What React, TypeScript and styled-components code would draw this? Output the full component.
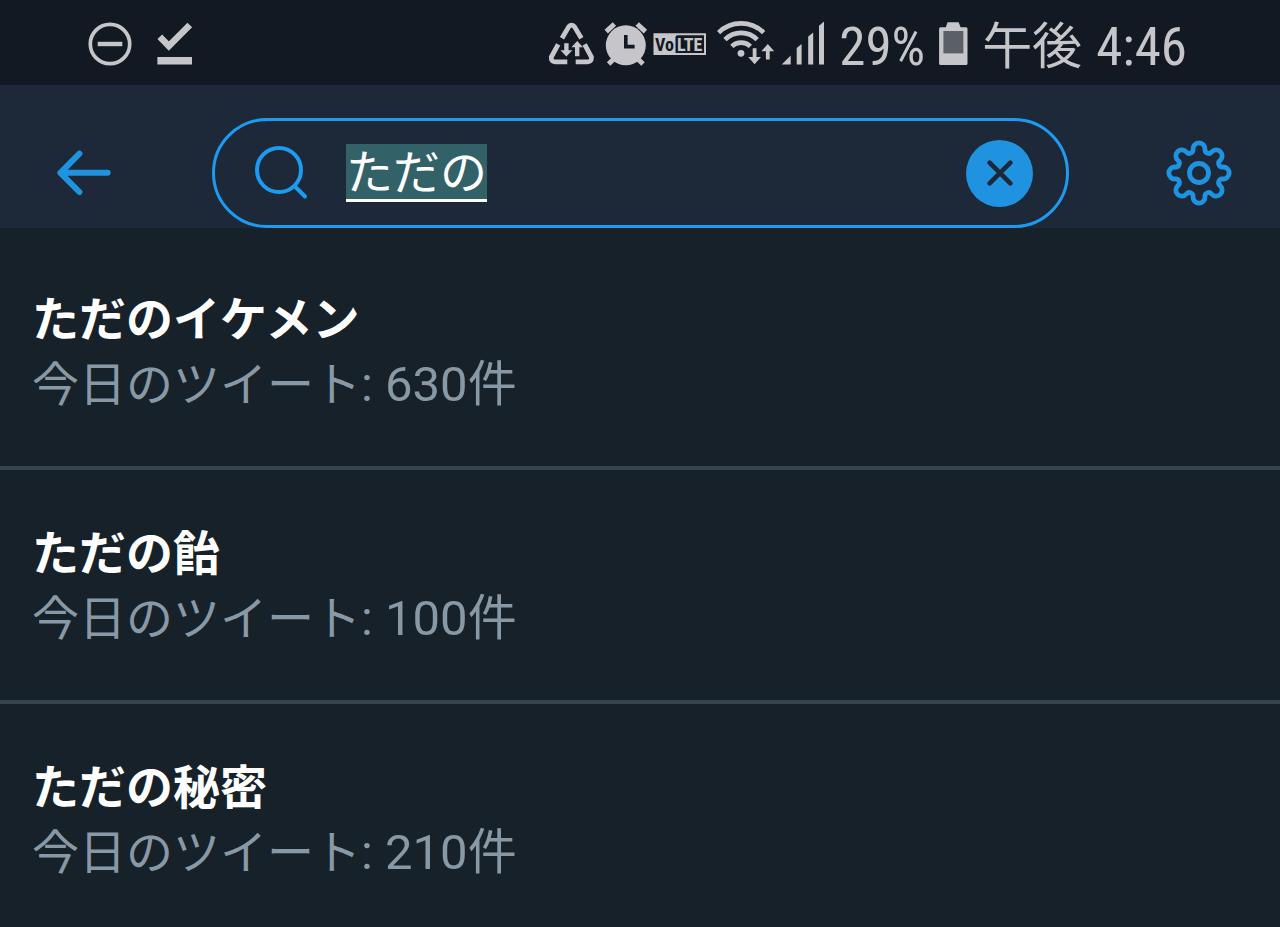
import React, { useState } from "react";
import styled, { createGlobalStyle } from "styled-components";

const color = {
  status: "#121922",
  header: "#1d2938",
  page: "#17212a",
  divider: "#37444d",
  accent: "#1d9bf0",
  icon: "#1f93e0",
  muted: "#8899a5",
  glyph: "#c6c6ca",
  selection: "#326268",
};

const GlobalStyle = createGlobalStyle`
  *, *::before, *::after { box-sizing: border-box; }
  html { background: ${color.page}; }
  body {
    margin: 0;
    background: ${color.page};
    font-family: Roboto, "Noto Sans CJK JP", sans-serif;
  }
`;

const StatusBar = styled.div`
  display: flex;
  align-items: center;
  justify-content: space-between;
  height: 85px;
  padding: 4px 93px 0 88px;
  background: ${color.status};
  color: ${color.glyph};
`;

const StatusGroup = styled.div<{ $gap: number }>`
  display: flex;
  align-items: center;
  gap: ${(p) => p.$gap}px;
`;

const StatusIcon = styled.svg`
  display: block;
  flex: none;
  overflow: visible;
`;

const StatusText = styled.span<{ $size: number }>`
  padding-top: 4px;
  font-family: "Roboto Condensed", "Liberation Sans Narrow", Roboto, "Noto Sans CJK JP", sans-serif;
  font-size: ${(p) => p.$size}px;
  line-height: 64px;
  white-space: nowrap;
`;

const Header = styled.header`
  display: flex;
  align-items: center;
  padding-top: 33px;
  background: ${color.header};
`;

const IconButton = styled.button<{ $side: "left" | "right" }>`
  display: flex;
  flex: none;
  justify-content: ${(p) => (p.$side === "left" ? "flex-start" : "flex-end")};
  width: ${(p) => (p.$side === "left" ? 212 : 211)}px;
  padding: ${(p) => (p.$side === "left" ? "0 0 0 56px" : "0 48px 0 0")};
  border: 0;
  background: none;
  color: ${color.icon};
  cursor: pointer;
`;

const SearchField = styled.label`
  display: flex;
  flex: 1;
  align-items: center;
  min-width: 0;
  height: 110px;
  padding: 0 33px 0 40px;
  border: 3px solid ${color.accent};
  border-radius: 55px;
  color: ${color.accent};
`;

const QueryArea = styled.span`
  display: flex;
  flex: 1;
  min-width: 0;
  padding-left: 37px;
`;

const QueryInput = styled.input`
  field-sizing: content;
  height: 58px;
  padding: 0 0 7px;
  border: 0;
  border-bottom: 3px solid #fff;
  border-radius: 0;
  outline: 0;
  background: ${color.selection};
  color: #fff;
  font-family: Roboto, "Noto Sans CJK JP", sans-serif;
  font-size: 47px;
  line-height: 48px;
`;

const ClearButton = styled.button`
  display: flex;
  flex: none;
  align-items: center;
  justify-content: center;
  width: 67px;
  height: 67px;
  padding: 0;
  border: 0;
  border-radius: 50%;
  background: ${color.icon};
  color: ${color.header};
  cursor: pointer;
`;

const TrendList = styled.ul`
  margin: 0;
  padding: 8px 0 0;
  list-style: none;
`;

const TrendItem = styled.li`
  border-bottom: 4px solid ${color.divider};
  &:last-child { border-bottom: 0; }
`;

const TrendLink = styled.a`
  display: block;
  padding: 51px 32px 49px;
  color: inherit;
  text-decoration: none;
`;

const TrendName = styled.div`
  color: #fff;
  font-size: 47px;
  font-weight: 700;
  line-height: 65px;
`;

const TrendCount = styled.div`
  color: ${color.muted};
  font-size: 47px;
  line-height: 65px;
`;

const Figure = styled.span`
  font-size: 49px;
`;

const trends = [
  { name: "ただのイケメン", count: 630 },
  { name: "ただの飴", count: 100 },
  { name: "ただの秘密", count: 210 },
];

function polar(radius: number, degrees: number) {
  const a = ((degrees - 90) * Math.PI) / 180;
  return { x: radius * Math.cos(a), y: radius * Math.sin(a) };
}

/* Eight round teeth joined by tangent arcs. */
function gearPath() {
  const tooth = 6;
  const notch = 3.7;
  const touch = (toothAngle: number, notchAngle: number) => {
    const c = polar(24, toothAngle);
    const v = polar(25.2, notchAngle);
    const t = tooth / (tooth + notch);
    return `${(c.x + (v.x - c.x) * t).toFixed(2)} ${(c.y + (v.y - c.y) * t).toFixed(2)}`;
  };
  let d = `M${touch(0, -22.5)}`;
  for (let k = 0; k < 8; k++) {
    const a = k * 45;
    d += `A${tooth} ${tooth} 0 1 1 ${touch(a, a + 22.5)}`;
    d += `A${notch} ${notch} 0 0 0 ${touch(a + 45, a + 22.5)}`;
  }
  return d + "Z";
}

const DoNotDisturb = () => (
  <StatusIcon width="44" height="48" fill="none" stroke="currentColor">
    <circle cx="22" cy="23" r="19.7" strokeWidth="3.7" />
    <path d="M9.7 23H34.3" strokeWidth="4.4" />
  </StatusIcon>
);

const DownloadDone = () => (
  <StatusIcon width="36" height="48" fill="none" stroke="currentColor">
    <path d="M2.8 15.8L11.8 25L32.8 4" strokeWidth="6.6" />
    <path d="M.4 39.8H35" strokeWidth="7.6" />
  </StatusIcon>
);

const DataSaver = () => (
  <StatusIcon width="48" height="48" fill="none" stroke="currentColor">
    <g strokeWidth="4.8">
      <path d="M14 17.3L20.8 5.6Q23.5 2.6 26.4 5.6L33.4 17.3" />
      <path d="M10.2 23.3L3.3 36Q3 40.8 7 40.8H19.3" />
      <path d="M36.6 23.3L43.4 36Q43.8 40.8 39.7 40.8H27.7" />
    </g>
    <path
      fill="currentColor"
      stroke="none"
      d="M16.2 22.3h4.4v7h3.8l-6 6.2-6-6.2h3.8zM29.2 20l5.8 6.3h-3.6v8.9H27v-8.9h-3.6z"
    />
  </StatusIcon>
);

const Alarm = () => (
  <StatusIcon width="41" height="48" fill="none" stroke="currentColor">
    <circle cx="21.8" cy="24.3" r="20" fill="currentColor" stroke="none" />
    <path d="M2.2 10.6L10.4 3M33.2 3L41.4 10.6M10 37.8L4.6 43M33.6 37.8L39 43" strokeWidth="5" />
    <path d="M21.8 14V25.6H30.6" stroke={color.status} strokeWidth="3.6" />
  </StatusIcon>
);

const BadgeText = styled.text`
  font-family: "Roboto Condensed", "Open Sans", sans-serif;
  font-size: 18px;
  font-weight: 700;
`;

const Volte = () => (
  <StatusIcon width="55" height="48" fill="currentColor">
    <path d="M.5 12.3H53V34H.5z" />
    <path d="M24.5 14.3H51V32H22.5V16.3Q22.5 14.3 24.5 14.3z" fill={color.status} />
    <BadgeText x="2" y="30" fill={color.status}>Vo</BadgeText>
    <BadgeText x="24" y="30">LTE</BadgeText>
  </StatusIcon>
);

const Wifi = () => (
  <StatusIcon width="57" height="48" fill="none" stroke="currentColor">
    <g strokeWidth="4.6">
      <path d="M2.6 11.6A32 32 0 0 1 47.6 11.6" />
      <path d="M9 18.6A22.6 22.6 0 0 1 41.2 18.6" />
      <path d="M15.8 25.4A13.4 13.4 0 0 1 34.4 25.4" />
    </g>
    <circle cx="25" cy="32.3" r="3.4" fill="currentColor" stroke="none" />
    <path
      fill="currentColor"
      stroke="none"
      d="M36.7 27.3h3.8V36H45l-6.4 7.2-6.4-7.2h4.5zM51.8 23l6.4 7.2h-4.5v8.4h-3.8v-8.4h-4.5z"
    />
  </StatusIcon>
);

const Signal = () => (
  <StatusIcon width="44" height="48" fill="currentColor">
    <path d="M.7 43.6L9.7 34.4V43.6zM15.7 27L20.6 23V43.6H15.7zM27.2 15.6L32.2 11.4V43.6H27.2zM38 4.8L43 .6V43.6H38z" />
  </StatusIcon>
);

const Battery = () => (
  <StatusIcon width="29" height="48" fill="currentColor">
    <path d="M8.6 1.3H19.6L21.6 6.3H27Q28.5 6.3 28.5 7.8V42.5Q28.5 44 27 44H1.6Q.1 44 .1 42.5V7.8Q.1 6.3 1.6 6.3H6.8z" />
    <path d="M4.4 10H24.4V32.4H4.4z" fill="#5b6067" />
  </StatusIcon>
);

export default function App() {
  const [query, setQuery] = useState("ただの");
  return (
    <>
      <GlobalStyle />
      <StatusBar>
        <StatusGroup $gap={25}>
          <DoNotDisturb />
          <DownloadDone />
        </StatusGroup>
        <StatusGroup $gap={14}>
          <StatusGroup $gap={8}>
            <DataSaver />
            <Alarm />
            <Volte />
            <Wifi />
            <Signal />
          </StatusGroup>
          <StatusText $size={53}>29%</StatusText>
          <Battery />
          <StatusText $size={50}>午後</StatusText>
          <StatusText $size={53}>4:46</StatusText>
        </StatusGroup>
      </StatusBar>
      <Header>
        <IconButton type="button" $side="left" aria-label="戻る">
          <svg width="56" height="46" fill="none" stroke="currentColor" strokeWidth="6" strokeLinecap="round" strokeLinejoin="round">
            <path d="M23.4 3.6L4.4 22.8L23.4 42M4.4 22.8H51.6" />
          </svg>
        </IconButton>
        <SearchField>
          <svg width="54" height="54" fill="none" stroke="currentColor" strokeWidth="4" strokeLinecap="round">
            <circle cx="24" cy="24" r="22" />
            <path d="M40 40.5L50 50.5" />
          </svg>
          <QueryArea>
            <QueryInput
              type="text"
              aria-label="キーワード検索"
              value={query}
              onChange={(e) => setQuery(e.target.value)}
            />
          </QueryArea>
          <ClearButton type="button" aria-label="クリア" onClick={() => setQuery("")}>
            <svg width="28" height="28" fill="none" stroke="currentColor" strokeWidth="4.6" strokeLinecap="round">
              <path d="M3.6 3.6L24.4 24.4M24.4 3.6L3.6 24.4" />
            </svg>
          </ClearButton>
        </SearchField>
        <IconButton type="button" $side="right" aria-label="設定">
          <svg width="66" height="66" viewBox="-33 -33 66 66" fill="none" stroke="currentColor" strokeWidth="4.8">
            <path d={gearPath()} />
            <circle r="9.5" />
          </svg>
        </IconButton>
      </Header>
      <main>
        <TrendList>
          {trends.map((trend) => (
            <TrendItem key={trend.name}>
              <TrendLink href="#">
                <TrendName>{trend.name}</TrendName>
                <TrendCount>
                  今日のツイート<Figure>: {trend.count}件</Figure>
                </TrendCount>
              </TrendLink>
            </TrendItem>
          ))}
        </TrendList>
      </main>
    </>
  );
}
